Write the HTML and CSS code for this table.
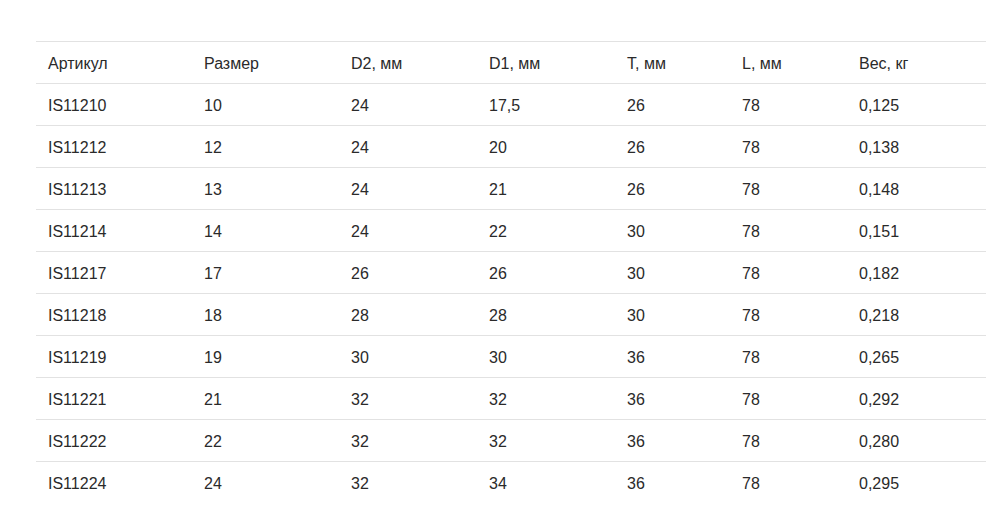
FILE: index.html
```html
<!DOCTYPE html>
<html lang="ru">
<head>
<meta charset="utf-8">
<link rel="stylesheet" href="styles.css">
</head>
<body>
<div class="wrap">
<table class="spec">
<thead>
<tr><th>Артикул</th><th>Размер</th><th>D2, мм</th><th>D1, мм</th><th>T, мм</th><th>L, мм</th><th>Вес, кг</th></tr>
</thead>
<tbody>
<tr><td>IS11210</td><td>10</td><td>24</td><td>17,5</td><td>26</td><td>78</td><td>0,125</td></tr>
<tr><td>IS11212</td><td>12</td><td>24</td><td>20</td><td>26</td><td>78</td><td>0,138</td></tr>
<tr><td>IS11213</td><td>13</td><td>24</td><td>21</td><td>26</td><td>78</td><td>0,148</td></tr>
<tr><td>IS11214</td><td>14</td><td>24</td><td>22</td><td>30</td><td>78</td><td>0,151</td></tr>
<tr><td>IS11217</td><td>17</td><td>26</td><td>26</td><td>30</td><td>78</td><td>0,182</td></tr>
<tr><td>IS11218</td><td>18</td><td>28</td><td>28</td><td>30</td><td>78</td><td>0,218</td></tr>
<tr><td>IS11219</td><td>19</td><td>30</td><td>30</td><td>36</td><td>78</td><td>0,265</td></tr>
<tr><td>IS11221</td><td>21</td><td>32</td><td>32</td><td>36</td><td>78</td><td>0,292</td></tr>
<tr><td>IS11222</td><td>22</td><td>32</td><td>32</td><td>36</td><td>78</td><td>0,280</td></tr>
<tr><td>IS11224</td><td>24</td><td>32</td><td>34</td><td>36</td><td>78</td><td>0,295</td></tr>
</tbody>
</table>
</div>
</body>
</html>
```
FILE: styles.css
```css
html, body {
  margin: 0;
  padding: 0;
  background: #fff;
}
.wrap {
  padding: 41px 22px 0 36px;
}
.spec {
  width: 950px;
  border-collapse: collapse;
  table-layout: fixed;
  font-family: "Liberation Sans", Arial, sans-serif;
  font-size: 16px;
  color: #2a2a2a;
}
.spec th,
.spec td {
  text-align: left;
  font-weight: normal;
  padding: 11px 12px 9px;
  line-height: 21px;
  border-top: 1px solid #e2e2e2;
  white-space: nowrap;
}
.spec th:nth-child(1) { width: 132px; }
.spec th:nth-child(2) { width: 123px; }
.spec th:nth-child(3) { width: 114px; }
.spec th:nth-child(4) { width: 114px; }
.spec th:nth-child(5) { width: 91px; }
.spec th:nth-child(6) { width: 93px; }
.spec th:nth-child(7) { width: 115px; }
```
